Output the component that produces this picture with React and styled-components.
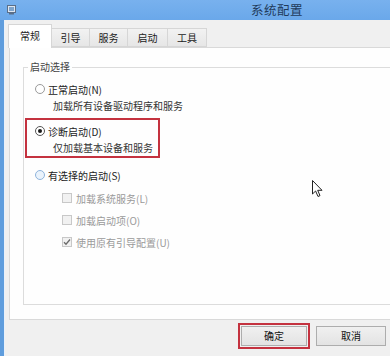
import React from 'react';
import styled, { createGlobalStyle } from 'styled-components';

const Global = createGlobalStyle`
  html, body { margin: 0; padding: 0; background: #f0f0f0; overflow: hidden; }
  body { font-family: "Noto Sans CJK SC", "Microsoft YaHei", sans-serif; }
`;

const Frame = styled.div`
  position: relative;
  width: 390px;
  height: 356px;
  display: flex;
  flex-direction: column;
  overflow: hidden;
  background: #f0f0f0;
`;

const TitleBar = styled.div`
  height: 20px;
  flex: none;
  display: flex;
  align-items: center;
  background: linear-gradient(#78b1ee, #6aa8ea);
  padding-left: 7px;
`;

const Title = styled.div`
  margin-left: 235px;
  font-size: 12.5px;
  line-height: 20px;
  color: #1f3a5a;
  letter-spacing: 0.5px;
`;

const Body = styled.div`
  flex: 1;
  display: flex;
  flex-direction: column;
  border-left: 4px solid #5f9ddd;
  box-shadow: inset 1px 0 0 #e8f1fb;
  overflow: hidden;
`;

const Tabs = styled.div`
  display: flex;
  align-items: flex-end;
  margin: 4px 0 0 4px;
  position: relative;
  z-index: 1;
`;

const Tab = styled.div`
  width: ${p => p.$w}px;
  height: ${p => (p.$active ? 24 : 19)}px;
  box-sizing: border-box;
  border: 1px solid #d6d6d6;
  border-bottom: ${p => (p.$active ? 'none' : '1px solid #d6d6d6')};
  border-left: ${p => (p.$first || p.$active ? '1px solid #d6d6d6' : 'none')};
  background: ${p => (p.$active ? '#ffffff' : 'linear-gradient(#f2f2f2, #e6e6e6)')};
  margin-bottom: ${p => (p.$active ? '-1px' : '0')};
  font-size: 10px;
  line-height: ${p => (p.$active ? 22 : 17)}px;
  text-align: center;
  color: #222;
`;

const Pane = styled.div`
  width: 440px;
  height: 273px;
  box-sizing: border-box;
  margin-left: 5px;
  border: 1px solid #d9d9d9;
  background: #fefefe;
  display: flex;
  flex-direction: column;
  padding: 12px 0 14px 13px;
`;

const Group = styled.fieldset`
  flex: 1;
  margin: 0;
  padding: 2px 0 0 0;
  border: 1px solid #dcdcdc;
  min-width: 0;
`;

const Legend = styled.legend`
  margin-left: 4px;
  padding: 0 2px;
  font-size: 10px;
  line-height: 14px;
  color: #444;
`;

const Option = styled.div`
  width: ${p => (p.$marked ? '123px' : 'max-content')};
  margin: ${p => p.$gap}px 0 0 1px;
  border: 2px solid ${p => (p.$marked ? '#c4323f' : 'transparent')};
  padding: 2px 0 0 8px;
`;

const Row = styled.div`
  display: flex;
  align-items: center;
  height: 18px;
  gap: 3px;
  font-size: 10px;
  color: #222;
`;

const Radio = styled.span`
  width: 10px;
  height: 10px;
  box-sizing: border-box;
  border-radius: 50%;
  border: 1px solid ${p => (p.$tint ? '#8fb4dc' : p.$checked ? '#555' : '#9a9a9a')};
  background: ${p => (p.$tint ? '#eaf3fc' : '#fff')};
  display: flex;
  align-items: center;
  justify-content: center;
  &::after {
    content: '';
    width: 4px;
    height: 4px;
    border-radius: 50%;
    background: ${p => (p.$checked ? '#1a1a1a' : 'transparent')};
  }
`;

const Sub = styled.div`
  padding-left: 18px;
  font-size: 10px;
  line-height: 16px;
  color: #333;
  white-space: nowrap;
`;

const Checks = styled.div`
  margin: 1px 0 0 38px;
  display: flex;
  flex-direction: column;
`;

const CheckRow = styled.div`
  display: flex;
  align-items: center;
  height: 22px;
  gap: 4px;
  font-size: 10px;
  color: #9a9a9a;
`;

const Box = styled.span`
  width: 10px;
  height: 10px;
  box-sizing: border-box;
  border: 1px solid #c8c8c8;
  background: #f1f1f1;
  display: flex;
  align-items: center;
  justify-content: center;
`;

const Buttons = styled.div`
  display: flex;
  justify-content: flex-end;
  gap: 9px;
  width: 386px;
  box-sizing: border-box;
  padding-right: 4px;
  margin-top: 6px;
`;

const Button = styled.div`
  width: ${p => p.$w}px;
  height: 20px;
  box-sizing: border-box;
  border: 1px solid #adadad;
  background: linear-gradient(#f0f0f0, #e3e3e3);
  font-size: 10px;
  line-height: 18px;
  text-align: center;
  color: #111;
  outline: ${p => (p.$marked ? '2px solid #c4323f' : 'none')};
  outline-offset: 1px;
`;

const Cursor = styled.svg`
  position: absolute;
  left: 312px;
  top: 180px;
`;

const AppIcon = () => (
  <svg width="9" height="10" viewBox="0 0 9 10">
    <rect x="0.5" y="0.5" width="8" height="7" fill="#dfe7f1" stroke="#5a6e88" />
    <rect x="2" y="2" width="5" height="4" fill="#7ea4cc" />
    <rect x="2" y="8" width="5" height="1.5" fill="#5a6e88" />
  </svg>
);

const Check = () => (
  <svg width="8" height="8" viewBox="0 0 8 8">
    <path d="M1 4.2 L3 6.2 L7 1.5" fill="none" stroke="#6a6a6a" strokeWidth="1.3" />
  </svg>
);

const tabs = [
  { label: '常规', w: 44 },
  { label: '引导', w: 38 },
  { label: '服务', w: 38 },
  { label: '启动', w: 40 },
  { label: '工具', w: 39 },
];

export default function App() {
  return (
    <Frame>
      <Global />
      <TitleBar>
        <AppIcon />
        <Title>系统配置</Title>
      </TitleBar>
      <Body>
        <Tabs>
          {tabs.map((t, i) => (
            <Tab key={t.label} $w={t.w} $active={i === 0} $first={i === 0}>
              {t.label}
            </Tab>
          ))}
        </Tabs>
        <Pane>
          <Group>
            <Legend>启动选择</Legend>
            <Option $gap={0}>
              <Row><Radio />正常启动(N)</Row>
              <Sub>加载所有设备驱动程序和服务</Sub>
            </Option>
            <Option $gap={2} $marked>
              <Row><Radio $checked />诊断启动(D)</Row>
              <Sub>仅加载基本设备和服务</Sub>
            </Option>
            <Option $gap={4}>
              <Row><Radio $tint />有选择的启动(S)</Row>
            </Option>
            <Checks>
              <CheckRow><Box />加载系统服务(L)</CheckRow>
              <CheckRow><Box />加载启动项(O)</CheckRow>
              <CheckRow><Box><Check /></Box>使用原有引导配置(U)</CheckRow>
            </Checks>
          </Group>
        </Pane>
        <Buttons>
          <Button $w={66} $marked>确定</Button>
          <Button $w={70}>取消</Button>
        </Buttons>
      </Body>
      <Cursor width="11" height="18" viewBox="0 0 11 18">
        <path d="M0.5 0.5 L0.5 14 L3.6 11 L6 16.5 L8 15.6 L5.7 10.3 L10 10.3 Z" fill="#fff" stroke="#222" strokeWidth="1" strokeLinejoin="round" />
      </Cursor>
    </Frame>
  );
}
